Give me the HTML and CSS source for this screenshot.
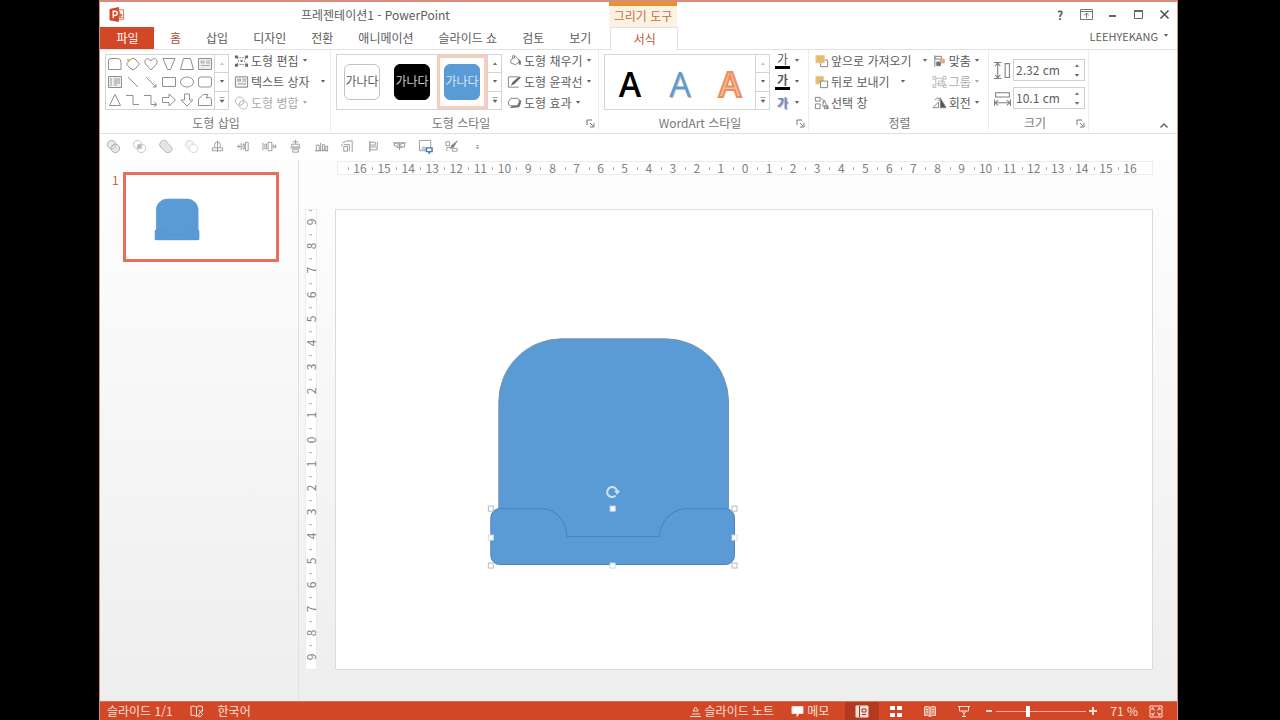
FILE: index.html
```html
<!DOCTYPE html>
<html lang="ko">
<head>
<meta charset="utf-8">
<title>프레젠테이션1 - PowerPoint</title>
<link rel="stylesheet" href="styles.css">
</head>
<body>
<svg class="defs" aria-hidden="true">
  <symbol id="more" viewBox="0 0 8 5"><path d="M1.800 1h4.400L4 3.800z" fill="#666"/></symbol>
  <symbol id="up" viewBox="0 0 8 5"><path d="M1.800 4h4.400L4 1.200z" fill="#777"/></symbol>
  <symbol id="last" viewBox="0 0 8 8"><path d="M1.500 1.500h5M2 4h4L4 6.500z" fill="#666" stroke="#666" stroke-width=".6"/></symbol>
  <symbol id="launch" viewBox="0 0 9 9"><path d="M1 6V1h5M4 4l3 3M8 4v4H4" fill="none" stroke="#777"/></symbol>
  <symbol id="hat" viewBox="0 0 246 230">
    <path d="M9 201V65A63 63 0 0 1 72 2H176A63 63 0 0 1 239 65V201Z" fill="#5b9bd5"/>
    <path d="M9 172V65A63 63 0 0 1 72 2H176A63 63 0 0 1 239 65V172" fill="none" stroke="#7690a8"/>
    <path d="M11 172H53A25 28 0 0 1 77 200H170A28 28 0 0 1 198 172H236A9 9 0 0 1 245 181V219A9 9 0 0 1 236 228H10A9 9 0 0 1 1 219V181A9 9 0 0 1 11 172Z" fill="#5b9bd5" stroke="#4c83b6"/>
  </symbol>
</svg>
<div class="window">
  <header class="titlebar">
    <svg class="logo" viewBox="0 0 16 16"><path d="M8 3h7v10H8z" fill="#fff" stroke="#dc6a4e"/><path d="M11 5a2.500 2.500 0 1 0 2.500 3H11zM10 11h4" fill="#dc6a4e" stroke="#dc6a4e"/><path d="M0 2l10-2v16L0 14z" fill="#d24726"/><path d="M4 12V4.500h2a2 2 0 0 1 0 4.500H4" fill="none" stroke="#fff" stroke-width="1.500"/></svg>
    <h1 class="title">프레젠테이션1 - PowerPoint</h1>
    <div class="context">그리기 도구</div>
    <div class="wincontrols">
      <button class="help" aria-label="도움말">?</button>
      <button aria-label="리본 표시 옵션"><svg viewBox="0 0 13 11"><path d="M.5.5h12v10H.5zM.5 2.500h12M6.500 9V4M4 6.500L6.500 4 9 6.500" fill="none" stroke="#777"/></svg></button>
      <button aria-label="최소화"><svg viewBox="0 0 13 11"><path d="M3 7h7" stroke="#666" stroke-width="2"/></svg></button>
      <button aria-label="최대화"><svg viewBox="0 0 13 11"><path d="M2.500 1.500h8v8h-8z" fill="none" stroke="#666"/><path d="M2 1h9v2H2z" fill="#666"/></svg></button>
      <button aria-label="닫기"><svg viewBox="0 0 13 11"><path d="M2.500 1.500l8 8M10.500 1.500l-8 8" stroke="#555" stroke-width="1.700"/></svg></button>
    </div>
  </header>
  <nav class="tabs">
    <button class="tab file">파일</button>
    <button class="tab">홈</button>
    <button class="tab">삽입</button>
    <button class="tab">디자인</button>
    <button class="tab">전환</button>
    <button class="tab">애니메이션</button>
    <button class="tab">슬라이드 쇼</button>
    <button class="tab">검토</button>
    <button class="tab">보기</button>
    <button class="tab active">서식</button>
    <button class="account">LEEHYEKANG <svg class="arrow"><use href="#more"/></svg></button>
  </nav>

  <section class="ribbon">
    <div class="group insert">
      <div class="body">
        <div class="gallery">
          <div class="shapes">
            <button aria-label="잘린 사각형"><svg viewBox="0 0 16 14"><path d="M1.500 12.500V4q0-2.500 2.500-2.500h7q3 0 3 4v7z"/></svg></button>
            <button aria-label="배지"><svg viewBox="0 0 16 14"><path d="M5 3l3-2 3 2 1 1 2.500 3L12 10l-1 1-3 2-3-2-1-1-2.500-3L4 4z"/><path d="M2 3h3" stroke="#e8b84a" stroke-width="2"/></svg></button>
            <button aria-label="하트"><svg viewBox="0 0 16 14"><path d="M8 13L2.500 7C0 3 5-1 8 4c3-5 8-1 5.500 3z"/></svg></button>
            <button aria-label="역삼각형"><svg viewBox="0 0 16 14"><path d="M2 1.500h12L9.500 12.500h-3z"/></svg></button>
            <button aria-label="사다리꼴"><svg viewBox="0 0 16 14"><path d="M1.500 12.500L4.500 1.500h7l3 11z"/></svg></button>
            <button aria-label="텍스트 상자"><svg viewBox="0 0 16 14"><path d="M1.500 1.500h13v11h-13z" fill="#eee"/><path d="M4 4h3v2H4zM9 4h4M9 6h4M4 8.500h9" stroke="#aaa"/></svg></button>
            <button aria-label="세로 텍스트"><svg viewBox="0 0 16 14"><path d="M1.500 1.500h13v11h-13z" fill="#eee"/><path d="M4 3v8M7 4h6M7 6h6M7 8h6M7 10h3" stroke="#999"/></svg></button>
            <button aria-label="선"><svg viewBox="0 0 16 14"><path d="M3 2l10 10"/></svg></button>
            <button aria-label="화살표"><svg viewBox="0 0 16 14"><path d="M3 2l10 10M13 9v3h-3"/></svg></button>
            <button aria-label="직사각형"><svg viewBox="0 0 16 14"><path d="M1.500 2.500h13v9h-13z"/></svg></button>
            <button aria-label="타원"><svg viewBox="0 0 16 14"><ellipse cx="8" cy="7" rx="6.500" ry="5"/></svg></button>
            <button aria-label="둥근 사각형"><svg viewBox="0 0 16 14"><rect x="1.500" y="2" width="13" height="10" rx="2"/></svg></button>
            <button aria-label="삼각형"><svg viewBox="0 0 16 14"><path d="M8 1.500l5.500 11h-11z"/></svg></button>
            <button aria-label="꺾인 선"><svg viewBox="0 0 16 14"><path d="M1 2.500h7v9h6"/></svg></button>
            <button aria-label="꺾인 화살표"><svg viewBox="0 0 16 14"><path d="M1 2.500h7v9h5M11 9l3 2.500-3 2"/></svg></button>
            <button aria-label="오른쪽 화살표"><svg viewBox="0 0 16 14"><path d="M1.500 4.500H8V1L14.500 7 8 13V9.500H1.500z"/></svg></button>
            <button aria-label="아래쪽 화살표"><svg viewBox="0 0 16 14"><path d="M5.500 1h5v6h3.500L8 13 2 7h3.500z"/></svg></button>
            <button aria-label="자유형"><svg viewBox="0 0 16 14"><path d="M1.500 12.500V6l5-4.500H11L9 5q5-2 5.500 2v5.500z"/></svg></button>
          </div>
          <div class="scroll"><button class="off" aria-label="위로"><svg><use href="#up"/></svg></button><button aria-label="아래로"><svg><use href="#more"/></svg></button><button aria-label="자세히"><svg class="tall"><use href="#last"/></svg></button></div>
        </div>
        <div class="commands">
          <button class="cmd"><svg class="ico" viewBox="0 0 16 14"><path d="M3 2.500L8 4l5-1.500L11 7l3 4.500-6-1-5 1L5 7z" stroke-dasharray="2 1"/><path d="M1 1h3v3H1zM12 1h3v3h-3zM1 10h3v3H1zM12 10h3v3h-3zM7 6h2v2H7z" fill="#666" stroke="none"/></svg>도형 편집<svg class="arrow"><use href="#more"/></svg></button>
          <button class="cmd wide"><svg class="ico" viewBox="0 0 16 14"><path d="M1.500 1.500h13v11h-13z" fill="#f3f3f3"/><path d="M4 4h3v2H4zM9 4h4M9 6h4M4 9h9" stroke="#999"/></svg>텍스트 상자<svg class="arrow"><use href="#more"/></svg></button>
          <button class="cmd" disabled><svg class="ico" viewBox="0 0 16 14"><circle cx="6" cy="5" r="4.500"/><circle cx="10" cy="9" r="4.500"/><path d="M5 8l4-4M7 10l4-4"/></svg>도형 병합<svg class="arrow"><use href="#more"/></svg></button>
        </div>
      </div>
      <div class="caption"><span>도형 삽입</span></div>
    </div>

    <div class="group styles">
      <div class="body">
        <div class="gallery">
          <div class="tiles">
            <button class="tile"><span class="chip light">가나다</span></button>
            <button class="tile"><span class="chip dark">가나다</span></button>
            <button class="tile selected"><span class="chip blue">가나다</span></button>
          </div>
          <div class="scroll"><button aria-label="위로"><svg><use href="#up"/></svg></button><button aria-label="아래로"><svg><use href="#more"/></svg></button><button aria-label="자세히"><svg class="tall"><use href="#last"/></svg></button></div>
        </div>
        <div class="commands">
          <button class="cmd"><svg class="ico" viewBox="0 0 16 14"><path d="M4 6l5-4 5 5-5 4-5-2zM6 4V1.500Q7-.5 8 1.500V4"/><path d="M12 5q4 2 2 6-2-1-1-4z" fill="#666"/></svg>도형 채우기<svg class="arrow"><use href="#more"/></svg></button>
          <button class="cmd"><svg class="ico" viewBox="0 0 16 14"><path d="M12 1.500H1.500v11h11"/><path d="M4 11l2-4 7-6 2 1-7 7z" fill="#666" stroke="none"/></svg>도형 윤곽선<svg class="arrow"><use href="#more"/></svg></button>
          <button class="cmd"><svg class="ico" viewBox="0 0 16 14"><path d="M4 12L13 11l2-6-3-2z" fill="#666"/><path d="M4 2h7q3 1 2 4l-2 4H4Q1 10 1.500 6z" fill="#fff"/></svg>도형 효과<svg class="arrow"><use href="#more"/></svg></button>
        </div>
      </div>
      <div class="caption"><span>도형 스타일</span><button class="launcher" aria-label="도형 서식"><svg viewBox="0 0 9 9"><use href="#launch"/></svg></button></div>
    </div>

    <div class="group wordart">
      <div class="body">
        <div class="gallery">
          <div class="tiles">
            <button class="tile letter ink">A</button>
            <button class="tile letter sky">A</button>
            <button class="tile letter peach">A</button>
          </div>
          <div class="scroll"><button class="off" aria-label="위로"><svg><use href="#up"/></svg></button><button aria-label="아래로"><svg><use href="#more"/></svg></button><button aria-label="자세히"><svg class="tall"><use href="#last"/></svg></button></div>
        </div>
        <div class="commands">
          <button class="cmd"><span class="glyph bar">가</span><svg class="arrow"><use href="#more"/></svg></button>
          <button class="cmd"><span class="glyph bar outline">가</span><svg class="arrow"><use href="#more"/></svg></button>
          <button class="cmd"><span class="glyph glow">가</span><svg class="arrow"><use href="#more"/></svg></button>
        </div>
      </div>
      <div class="caption"><span>WordArt 스타일</span><button class="launcher" aria-label="텍스트 효과 서식"><svg viewBox="0 0 9 9"><use href="#launch"/></svg></button></div>
    </div>

    <div class="group arrange">
      <div class="body">
        <div class="commands">
          <button class="cmd wide"><svg class="ico" viewBox="0 0 16 14"><path d="M7 6h7.500v7H7z" fill="#fff"/><path d="M2 1h9v8H2z" fill="#e2bd6c" stroke="#e9cf94"/></svg>앞으로 가져오기<svg class="arrow"><use href="#more"/></svg></button>
          <button class="cmd wide"><svg class="ico" viewBox="0 0 16 14"><path d="M2 1h8v8H2z" fill="#e2bd6c" stroke="#e9cf94"/><path d="M7 6h7.500v7H7z" fill="#fff"/></svg>뒤로 보내기<svg class="arrow"><use href="#more"/></svg></button>
          <button class="cmd"><svg class="ico" viewBox="0 0 16 14"><path d="M1.500 1h5v4h-5zM1.500 8h5v5h-5zM8 2l3 3-2 2M15 13l-4-9-2 6 3 1zM11 10h4v3h-4z"/></svg>선택 창</button>
        </div>
        <div class="commands">
          <button class="cmd"><svg class="ico" viewBox="0 0 16 14"><path d="M3 1v12" stroke="#777"/><path d="M4 2h6v3H4z"/><path d="M5 8h4v4H5z" fill="#4f6f9c"/><path d="M9 5h4v4H9z" fill="#e9b08c" stroke="#d79a77"/></svg>맞춤<svg class="arrow"><use href="#more"/></svg></button>
          <button class="cmd" disabled><svg class="ico" viewBox="0 0 16 14"><path d="M1 1h3v3H1zM12 1h3v3h-3zM1 10h3v3H1zM12 10h3v3h-3zM4 3h7v6H4zM7 6h6v5H7z"/></svg>그룹<svg class="arrow"><use href="#more"/></svg></button>
          <button class="cmd"><svg class="ico" viewBox="0 0 16 14"><path d="M1 12h6V6zM3 4q3-4 6-1M9 1v3H6"/><path d="M9 2v10h6z" fill="#555"/></svg>회전<svg class="arrow"><use href="#more"/></svg></button>
        </div>
      </div>
      <div class="caption"><span>정렬</span></div>
    </div>

    <div class="group size">
      <div class="body fields">
        <div class="field">
          <label for="h" aria-label="높이"><svg class="ico" viewBox="0 0 16 16"><path d="M3.500 1v14M1 4l2.500-3L6 4M1 12l2.500 3L6 12M0 .5h7M0 15.500h7M10.500 1.500h4v13h-4z"/></svg></label>
          <div class="spin"><input id="h" type="text" value="2.32 cm"><div class="steps"><button aria-label="높이 늘리기"><svg><use href="#up"/></svg></button><button aria-label="높이 줄이기"><svg><use href="#more"/></svg></button></div></div>
        </div>
        <div class="field">
          <label for="w" aria-label="너비"><svg class="ico" viewBox="0 0 16 16"><path d="M1.500 2.500h13v4h-13zM1 12h14M4 9.500L1 12l3 2.500M12 9.500l3 2.500-3 2.500M.5 9v6M15.500 9v6"/></svg></label>
          <div class="spin"><input id="w" type="text" value="10.1 cm"><div class="steps"><button aria-label="너비 늘리기"><svg><use href="#up"/></svg></button><button aria-label="너비 줄이기"><svg><use href="#more"/></svg></button></div></div>
        </div>
      </div>
      <div class="caption"><span>크기</span><button class="launcher" aria-label="크기 및 위치"><svg viewBox="0 0 9 9"><use href="#launch"/></svg></button></div>
    </div>
    <button class="collapse" aria-label="리본 축소"><svg viewBox="0 0 10 7"><path d="M1.500 5.500L5 2l3.500 3.500" fill="none" stroke="#666" stroke-width="1.500"/></svg></button>
  </section>

  <div class="quick">
    <button aria-label="병합"><svg viewBox="0 0 16 16"><g fill="#e8e8e8" stroke="#aaa"><circle cx="6" cy="6" r="4.500"/><circle cx="10" cy="10" r="4.500"/><path d="M6 9l3-3 1.500 1.500-3 3z" fill="#fff"/></g></svg></button>
    <button aria-label="결합"><svg viewBox="0 0 16 16"><g fill="none" stroke="#c4c4c4"><circle cx="6" cy="6" r="4.500"/><circle cx="10" cy="10" r="4.500"/><path d="M6 6h4v4H6z" fill="#bbb"/></g></svg></button>
    <button aria-label="통합"><svg viewBox="0 0 16 16"><path d="M3 3q4-4 7 1 1 2 3 3 4 4 0 7-4 2-7-2-1-2-3-3-3-3 0-6z" fill="#e5e5e5" stroke="#b4b4b4"/></svg></button>
    <button aria-label="빼기"><svg viewBox="0 0 16 16"><g fill="#f4f4f4" stroke="#d4d4d4"><circle cx="6" cy="6" r="4.500"/><circle cx="10" cy="10" r="4.500" fill="#fff"/></g></svg></button>
    <button aria-label="도형 회전"><svg viewBox="0 0 16 16"><path d="M8 2v12M5 9V6q0-3 3-3t3 3v3M2.500 9.500h11v3h-11z"/></svg></button>
    <button aria-label="왼쪽 맞춤"><svg viewBox="0 0 16 16"><path d="M1 8h4M3 6v4M5.500 4v8M7.500 5.500h2v5h-2zM10 3.500h3v9h-3z"/></svg></button>
    <button aria-label="가로 간격"><svg viewBox="0 0 16 16"><path d="M1 4v8M3 5.500h2v5H3zM6.500 3.500h4v9h-4zM12 8h3M14.500 6v4M12 6v4"/></svg></button>
    <button aria-label="세로 가운데"><svg viewBox="0 0 16 16"><path d="M8 1v4M5 3h6M4 5.500h8v3H4zM2.500 9.500h11M5 11h6v3H5z"/></svg></button>
    <button aria-label="중간 맞춤"><svg viewBox="0 0 16 16"><path d="M1 12.500h14M2.500 6.500h3v6h-3zM7 4v9M9 6h2v6H9zM12.500 7.500h2v5h-2z"/></svg></button>
    <button aria-label="위로 정렬"><svg viewBox="0 0 16 16"><path d="M3 4l4-2h6v12M4 6h6v7M4 8h4v5H4zM2 5v3"/></svg></button>
    <button aria-label="앞으로"><svg viewBox="0 0 16 16"><path d="M4 2v12M4 3.500h6v3H4zM4 8.500h8v3H4zM12 3v5"/></svg></button>
    <button aria-label="위쪽 맞춤"><svg viewBox="0 0 16 16"><path d="M1 4h14M2.500 4.500h4v3h-4zM8 4v8M9.500 4.500h4v4h-4zM5 9h6"/></svg></button>
    <button aria-label="그림 저장"><svg viewBox="0 0 16 16"><path d="M1.500 1.500h12v11h-12z"/><path d="M3 11l3-4 3 3 2-2v4H3z" fill="#b9cfe4" stroke="none"/><path d="M9 9.500h6v4H9zM11 15h2" stroke="#4778ae" stroke-width="1.500" fill="#fff"/></svg></button>
    <button aria-label="서식 복사"><svg viewBox="0 0 16 16"><path d="M2 3h4v4H2zM3 13V9h5M14 2L8 9M9 10h5v3H9z"/><path d="M7 10l1-3 6-5-4 7z" fill="#777"/></svg></button>
    <button aria-label="빠른 실행 도구 모음 사용자 지정"><svg viewBox="0 0 16 16"><path d="M6.500 7h3M7 9h2l-1 1.500z" fill="#777"/></svg></button>
  </div>

  <main class="workspace">
    <aside class="pane">
      <span class="index">1</span>
      <button class="thumb" aria-label="슬라이드 1"><svg viewBox="0 0 817 460"><use href="#hat" x="155" y="127" width="246" height="230"/></svg></button>
    </aside>
    <div class="editor">
      <div class="ruler across">
        <span>16</span><span>15</span><span>14</span><span>13</span><span>12</span><span>11</span><span>10</span><span>9</span><span>8</span><span>7</span><span>6</span><span>5</span><span>4</span><span>3</span><span>2</span><span>1</span><span>0</span><span>1</span><span>2</span><span>3</span><span>4</span><span>5</span><span>6</span><span>7</span><span>8</span><span>9</span><span>10</span><span>11</span><span>12</span><span>13</span><span>14</span><span>15</span><span>16</span>
      </div>
      <div class="ruler down">
        <span>9</span><span>8</span><span>7</span><span>6</span><span>5</span><span>4</span><span>3</span><span>2</span><span>1</span><span>0</span><span>1</span><span>2</span><span>3</span><span>4</span><span>5</span><span>6</span><span>7</span><span>8</span><span>9</span>
      </div>
      <div class="slide">
        <svg viewBox="0 0 817 460">
          <use href="#hat" x="154" y="127" width="246" height="230"/>
          <g fill="#fff" stroke="#bbb">
            <rect x="152.500" y="296.500" width="5" height="5"/><rect x="396.500" y="296.500" width="5" height="5"/>
            <rect x="152.500" y="353.500" width="5" height="5"/><rect x="396.500" y="353.500" width="5" height="5"/>
            <g stroke="#c9dff2"><rect x="274.500" y="296.500" width="5" height="5"/><rect x="274.500" y="353.500" width="5" height="5"/><rect x="152.500" y="325.500" width="5" height="5"/><rect x="396.500" y="325.500" width="5" height="5"/></g>
          </g>
          <path d="M280 286a5 5 0 1 1 1.500-4" fill="none" stroke="#cfe2f4" stroke-width="2"/><path d="M278.500 281h6l-3 4z" fill="#cfe2f4"/>
        </svg>
      </div>
    </div>
  </main>

  <footer class="status">
    <span>슬라이드 1/1</span>
    <button class="proof" aria-label="맞춤법 검사"><svg viewBox="0 0 14 13"><path d="M6.500 2Q4 .5 1 1.500v9q3-1 5.500 1 2-2 3-1.500M6.500 2v9M6.500 2q3-2 6-.5v5M9 5l3 4M12 5L9 9M8 11l2 1 3-3"/></svg></button>
    <button>한국어</button>
    <div class="right">
      <button class="note"><svg viewBox="0 0 14 13"><path d="M1 11.500h11M3 9h8M4 6h5M6.500 2L4 6M6.500 2l3 4"/></svg>슬라이드 노트</button>
      <button class="memo"><svg viewBox="0 0 14 13"><path d="M1 1.500h11v7H8l-2 3v-3H1z" fill="#fff"/></svg>메모</button>
      <div class="views">
        <button class="on" aria-label="기본"><svg viewBox="0 0 14 13"><path d="M1 1h12v11H1z" fill="#fbe3dc"/><path d="M4.500 1v11M7 4h4v3H7zM7 9.500h4" stroke="#9c351d"/></svg></button>
        <button aria-label="여러 슬라이드"><svg viewBox="0 0 14 13"><path d="M1 1h5v4H1zM8 1h5v4H8zM1 8h5v4H1zM8 8h5v4H8z" fill="#fff" stroke="none"/></svg></button>
        <button aria-label="읽기용 보기"><svg viewBox="0 0 14 13"><path d="M7 2.500Q4 .5 1.500 2v8.500q3-1 5.500 1 2.500-2 5.500-1V2Q10 .5 7 2.500zM7 3v8M3 4.500h2M3 7h2M9 4.500h2M9 7h2" fill="#e08a70"/></svg></button>
        <button aria-label="슬라이드 쇼"><svg viewBox="0 0 14 13"><path d="M1 1.500h12M2.500 2v4h9V2M5 6l2 3 2-3M7 8v3M5 11.500h4"/></svg></button>
      </div>
      <div class="zoom">
        <button aria-label="축소"><svg viewBox="0 0 8 8"><path d="M1 4h6" stroke-width="2"/></svg></button>
        <input type="range" min="0" max="100" value="34" aria-label="확대/축소">
        <button aria-label="확대"><svg viewBox="0 0 8 8"><path d="M0 4h8M4 0v8" stroke-width="2"/></svg></button>
      </div>
      <button class="percent">71 %</button>
      <button class="fit" aria-label="창에 맞춤"><svg viewBox="0 0 14 13"><path d="M1 1h12v11H1zM3 3l3 2.500M11 3L8 5.500M3 10l3-2.500M11 10L8 7.500M3 5V3h2M9 3h2v2M3 8v2h2M9 10h2V8"/></svg></button>
    </div>
  </footer>
</div>
</body>
</html>
```
FILE: styles.css
```css
* { box-sizing: border-box; }

body {
  margin: 0;
  background: #000;
  font-family: "Noto Sans CJK KR", "Noto Sans", sans-serif;
  font-size: 12px;
  line-height: 16px;
  color: #5c5c5c;
}

button, input { font: inherit; color: inherit; }
button {
  display: flex;
  align-items: center;
  justify-content: center;
  padding: 0;
  border: 0;
  background: none;
  white-space: nowrap;
}
svg { flex: none; display: block; }
.defs { position: absolute; width: 0; height: 0; }

.window {
  display: flex;
  flex-direction: column;
  min-height: 100vh;
  margin: 0 102px 0 99px;
  border: 1px solid #d98b7c;
  border-width: 2px 1px 0;
  background: #fff;
}

/* Title bar */
.titlebar { display: flex; align-items: center; height: 25px; }
.logo { width: 16px; height: 15px; margin-left: 9px; }
.title { width: 308px; margin: 0 0 0 176px; font-size: 12px; font-weight: 400; white-space: nowrap; }
.context {
  width: 68px;
  height: 25px;
  border-top: 4px solid #e8922a;
  background: #fdf1e4;
  color: #c4703c;
  line-height: 19px;
  text-align: center;
  white-space: nowrap;
}
.wincontrols { display: flex; margin-left: auto; }
.wincontrols button { width: 26px; height: 20px; }
.wincontrols svg { width: 13px; height: 11px; }
.help { font-weight: 700; }

/* Tabs */
.tabs { display: flex; height: 23px; border-bottom: 1px solid #e1e1e1; }
.tab { padding: 0 12px 0 13px; }
.tab.file { width: 54px; margin-right: 3px; background: #d24726; color: #fff; }
.tab.file + .tab { color: #a5503c; }
.tab.active {
  width: 68px;
  height: 23px;
  margin-left: 7px;
  border: 1px solid #e1e1e1;
  border-bottom: 0;
  background: #fff;
  color: #c4563a;
}
.account { gap: 4px; height: 17px; margin-left: auto; padding-right: 7px; font-size: 11px; }

.arrow { width: 8px; height: 5px; }

/* Ribbon */
.ribbon { display: flex; height: 84px; border-bottom: 1px solid #e1e1e1; }
.group { display: flex; flex-direction: column; flex: none; padding: 0 3px 0 5px; margin-bottom: 2px; border-right: 1px solid #ececec; }
.insert { width: 231px; }
.styles { width: 268px; }
.wordart { width: 210px; }
.arrange { width: 180px; }
.size { width: 100px; }
.body { display: flex; flex: 1; gap: 5px; }
.arrange .body { gap: 3px; }
.caption { display: flex; align-items: center; height: 16px; color: #777; }
.caption span { flex: 1; text-align: center; }
.launcher { width: 9px; }
.launcher svg { width: 9px; height: 9px; }

.gallery { display: flex; flex: none; height: 56px; margin-top: 4px; border: 1px solid #d4d4d4; }
.shapes { display: grid; grid-template-columns: repeat(6, 18px); grid-template-rows: repeat(3, 18px); }
.shapes svg { width: 16px; height: 14px; fill: none; stroke: #909090; }
.scroll { display: flex; flex-direction: column; width: 14px; border-left: 1px solid #d4d4d4; }
.scroll button { flex: 1; }
.scroll button + button { border-top: 1px solid #d4d4d4; }
.scroll svg { width: 8px; height: 5px; }
.scroll .tall { height: 8px; }
.off { opacity: .4; }

.tiles { display: grid; grid-template-columns: repeat(3, 50px); align-items: stretch; }
.tile.selected { border: 3px solid #f8cdbd; }
.chip {
  width: 36px;
  height: 36px;
  border: 1px solid #c3c3bb;
  border-radius: 6px;
  line-height: 32px;
  text-align: center;
}
.chip.dark { border-color: #000; background: #000; color: #ccc; }
.chip.blue { border-color: #5b9bd5; background: #5b9bd5; color: #d5e7f7; }
.letter { padding-top: 4px; font: 600 34px/40px "Open Sans", sans-serif; }
.ink { color: #000; }
.sky { color: #5b9bd5; font-weight: 400; text-shadow: 1px 1px 1px #bbb; }
.peach { color: #f8bd98; -webkit-text-stroke: 2px #ee8d5c; }

.commands { display: flex; flex-direction: column; align-items: flex-start; }
.cmd { gap: 2px; height: 21px; }
.cmd.wide .arrow { margin-left: 7px; }
.cmd:disabled { color: #aaa; }
.cmd:disabled svg { opacity: .55; }
.ico { width: 15px; height: 14px; fill: none; stroke: #808080; }
.glyph { width: 15px; height: 16px; line-height: 12px; text-align: center; }
.wordart .cmd { gap: 3px; }
.bar { border-bottom: 3px solid #000; }
.outline { font-weight: 700; }
.glow { color: #6f8cb0; font-weight: 700; line-height: 16px; text-shadow: 1px 1px 1px #8ba5c4; }

.body.fields { flex-direction: column; gap: 6px; padding-top: 9px; }
.field { display: flex; align-items: center; gap: 2px; }
.field .ico { width: 17px; height: 17px; }
.spin { display: flex; flex: 1; height: 22px; border: 1px solid #cfcfcf; background: #fff; }
.spin input { flex: 1; width: 0; min-width: 0; padding: 0 0 0 2px; border: 0; background: none; outline: 0; }
.steps { display: flex; flex-direction: column; width: 15px; }
.steps button { flex: 1; }
.steps svg { width: 8px; height: 5px; }
.collapse { align-self: flex-end; width: 10px; height: 16px; margin: 0 8px 0 auto; }
.collapse svg { width: 10px; height: 7px; }

/* Quick access toolbar */
.quick { display: flex; height: 26px; padding-bottom: 2px; }
.quick button { width: 26px; }
.quick svg { width: 15px; height: 15px; fill: none; stroke: #999; }

/* Workspace */
.workspace { display: flex; flex: 1; background: linear-gradient(#fefefe, #eee); }
.pane { display: flex; align-items: flex-start; gap: 4px; width: 199px; padding: 12px 19px 0 12px; border-right: 1px solid #e0e0e0; }
.index { width: 7px; color: #d0604a; }
.thumb { flex: 1; border: 3px solid #e8705a; background: #fff; }
.thumb svg { width: 100%; }
.editor {
  display: grid;
  grid-template-columns: 12px 1fr;
  grid-template-rows: 14px auto;
  gap: 34px 18px;
  align-content: start;
  flex: 1;
  padding: 1px 24px 30px 6px;
}
.ruler { display: grid; background: #fff; border: 1px solid #ececec; color: #808080; line-height: 12px; }
.ruler span { display: flex; align-items: center; justify-content: center; background: linear-gradient(#aaa, #aaa) no-repeat; }
.across { grid-column: 2; grid-auto-flow: column; grid-auto-columns: minmax(0, 1fr); margin-left: 2px; padding: 0 10px; }
.across span { background-position: left center; background-size: 1px 3px; }
.down { grid-auto-rows: minmax(0, 1fr); }
.down span { writing-mode: vertical-rl; transform: rotate(180deg); line-height: 10px; background-position: center bottom; background-size: 3px 1px; }
.slide { border: 1px solid #dcdcdc; background: #fff; }
.slide svg { width: 100%; }

/* Status bar */
.status { display: flex; align-items: center; height: 19px; padding: 0 14px 0 7px; border-top: 1px solid #dd6f55; background: #d24726; color: #fbe0d8; white-space: nowrap; }
.status svg { width: 14px; height: 13px; fill: none; stroke: #fbe0d8; }
.proof { margin: 0 14px 0 17px; }
.right { display: flex; align-items: center; height: 18px; margin-left: auto; }
.note, .memo { gap: 2px; }
.memo { margin-left: 17px; }
.views { display: flex; margin-left: 16px; }
.views button { width: 34px; height: 18px; }
.views .on { background: #b23a1e; }
.zoom { display: flex; align-items: center; gap: 3px; margin-left: 4px; }
.status .zoom svg { width: 8px; height: 8px; }
.zoom input { appearance: none; width: 90px; height: 12px; margin: 0; background: linear-gradient(#f0b5a5, #f0b5a5) center / 100% 1px no-repeat; }
.zoom input::-webkit-slider-thumb { appearance: none; width: 4px; height: 11px; background: #fff; }
.percent { margin-left: 13px; }
.fit { margin-left: 11px; }
```
